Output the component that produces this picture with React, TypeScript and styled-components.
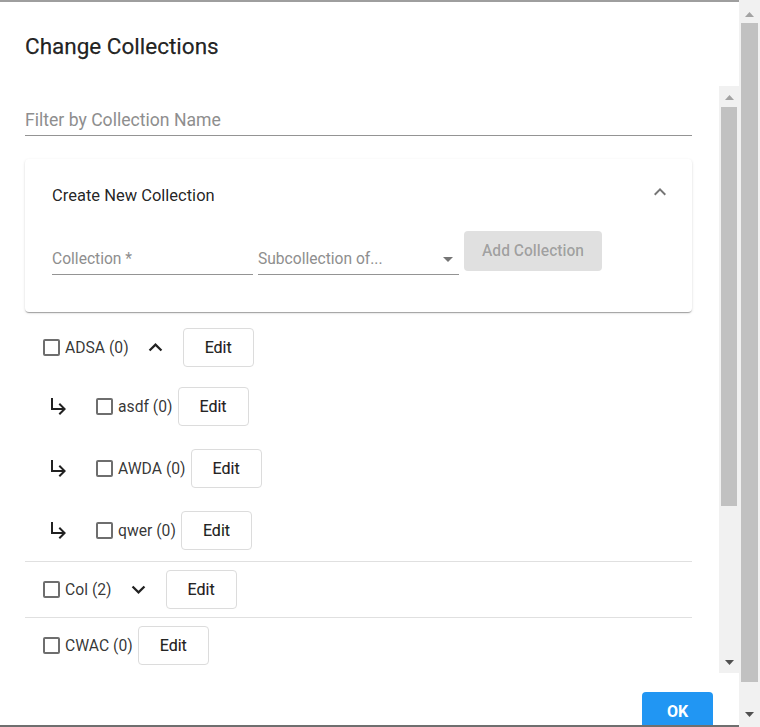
import React from 'react';
import styled, { createGlobalStyle } from 'styled-components';

const GlobalStyle = createGlobalStyle`
  html, body { margin: 0; padding: 0; background: #fff; overflow: hidden; }
  body { font-family: Roboto, "Noto Sans", Arial, sans-serif; }
  * { box-sizing: border-box; }
`;

/* ---------- scroll rails (drawn) ---------- */

const Rail = styled.div<{ $w: number }>`
  flex: none;
  width: ${(p) => p.$w}px;
  display: flex;
  flex-direction: column;
  background: #f1f1f1;
`;

const RailButton = styled.div<{ $h: number; $pt: number }>`
  flex: none;
  height: ${(p) => p.$h}px;
  padding-top: ${(p) => p.$pt}px;
  display: flex;
  justify-content: center;
  align-items: flex-start;
  svg {
    display: block;
  }
`;

const Thumb = styled.div<{ $top: number; $len: number }>`
  flex: none;
  margin: ${(p) => p.$top}px 2px 0;
  height: ${(p) => p.$len}px;
  background: #c1c1c1;
`;

const RailGap = styled.div`
  flex: 1;
`;

type RailProps = { w: number; upPad: number; downPad: number; thumbTop: number; thumbLen: number };

const ScrollRail = ({ w, upPad, downPad, thumbTop, thumbLen }: RailProps) => (
  <Rail $w={w}>
    <RailButton $h={w} $pt={upPad}>
      <svg width="9" height="5" viewBox="0 0 9 5">
        <polygon points="0,5 4.5,0 9,5" fill="#a3a3a3" />
      </svg>
    </RailButton>
    <Thumb $top={thumbTop} $len={thumbLen} />
    <RailGap />
    <RailButton $h={w} $pt={downPad}>
      <svg width="9" height="5" viewBox="0 0 9 5">
        <polygon points="0,0 9,0 4.5,5" fill="#505050" />
      </svg>
    </RailButton>
  </Rail>
);

/* ---------- dialog ---------- */

const Dialog = styled.div`
  height: 727px;
  display: flex;
  overflow: hidden;
  background: #fff;
`;

const Main = styled.div`
  flex: 1;
  min-width: 0;
  height: 727px;
  overflow: hidden;
  border-top: 2px solid #9e9e9e;
  border-bottom: 2px solid #6f6f6f;
`;

const Title = styled.h2`
  margin: 0;
  padding: 32px 25px 0;
  font-size: 22.5px;
  line-height: 24px;
  font-weight: 400;
  color: rgba(0, 0, 0, 0.87);
  -webkit-text-stroke: 0.25px rgba(0, 0, 0, 0.87);
`;

const ContentArea = styled.div`
  margin-top: 28px;
  height: 587px;
  display: flex;
  overflow: hidden;
`;

const ContentBody = styled.div`
  flex: 1;
  min-width: 0;
  padding: 18px 27px 0 25px;
  overflow: hidden;
`;

const TextInput = styled.input<{ $width?: number; $size?: number }>`
  display: block;
  width: ${(p) => (p.$width ? `${p.$width}px` : '100%')};
  height: 32px;
  padding: 7px 0 6px;
  border: none;
  border-bottom: 1px solid #949494;
  border-radius: 0;
  outline: none;
  background: transparent;
  font-family: Roboto, Arial, sans-serif;
  font-size: ${(p) => p.$size ?? 16}px;
  color: rgba(0, 0, 0, 0.87);
  &::placeholder {
    color: #8e8e8e;
    opacity: 1;
  }
`;

const Card = styled.section`
  margin-top: 23px;
  background: #fff;
  border-radius: 4px;
  box-shadow: 0 2px 1px -1px rgba(0, 0, 0, 0.2), 0 1px 1px 0 rgba(0, 0, 0, 0.14),
    0 1px 3px 0 rgba(0, 0, 0, 0.12);
  padding: 0 20px 37px 27px;
`;

const CardHeader = styled.div`
  height: 72px;
  display: flex;
  align-items: center;
  justify-content: space-between;
`;

const CardTitle = styled.span`
  font-size: 16.5px;
  color: rgba(0, 0, 0, 0.87);
`;

const HeaderChevron = styled.svg`
  width: 24px;
  height: 24px;
  margin-top: -7px;
  fill: rgba(0, 0, 0, 0.54);
`;

const FieldsRow = styled.div`
  display: flex;
  align-items: flex-end;
  gap: 5px;
`;

const SelectBox = styled.div`
  width: 201px;
  height: 32px;
  padding-top: 1px;
  display: flex;
  align-items: center;
  justify-content: space-between;
  border-bottom: 1px solid #949494;
  font-size: 15.6px;
  color: #8e8e8e;
`;

const DropIcon = styled.svg`
  width: 24px;
  height: 24px;
  margin-right: -1px;
  fill: rgba(0, 0, 0, 0.54);
`;

const AddButton = styled.button`
  width: 138px;
  height: 40px;
  margin: 0 0 4px;
  padding: 0;
  border: none;
  border-radius: 4px;
  background: #e0e0e0;
  color: rgba(0, 0, 0, 0.3);
  font-family: Roboto, Arial, sans-serif;
  font-size: 15.6px;
  font-weight: 500;
`;

const List = styled.div`
  margin-top: 8px;
`;

const Group = styled.div`
  border-bottom: 1px solid #e0e0e0;
`;

const Row = styled.div<{ $sub?: boolean }>`
  display: flex;
  align-items: center;
  padding: ${(p) => (p.$sub ? '11.5px 0 11.5px 22px' : '8px 0 8px 18px')};
`;

const SubArrow = styled.svg`
  width: 24px;
  height: 24px;
  margin-right: 25px;
  fill: rgba(0, 0, 0, 0.87);
  flex: none;
`;

const CheckBox = styled.span`
  width: 17px;
  height: 17px;
  border: 2px solid #6e6e6e;
  border-radius: 2px;
  flex: none;
  margin-right: 5px;
`;

const Label = styled.span`
  font-size: 15.7px;
  color: rgba(0, 0, 0, 0.8);
  margin-right: 5px;
  white-space: nowrap;
`;

const ToggleIcon = styled.span`
  width: 44px;
  height: 39px;
  margin-right: 5px;
  display: flex;
  align-items: center;
  justify-content: center;
  svg {
    width: 27px;
    height: 27px;
    fill: rgba(0, 0, 0, 0.87);
  }
`;

const EditButton = styled.button`
  height: 39px;
  padding: 0 21px;
  border: 1px solid #dcdcdc;
  border-radius: 4px;
  background: #fff;
  font-family: Roboto, Arial, sans-serif;
  font-size: 16px;
  font-weight: 400;
  color: rgba(0, 0, 0, 0.87);
  -webkit-text-stroke: 0.2px rgba(0, 0, 0, 0.87);
`;

const Footer = styled.div`
  display: flex;
  justify-content: flex-end;
  padding: 19px 26px 26px;
`;

const OkButton = styled.button`
  width: 71px;
  height: 38px;
  border: none;
  border-radius: 4px;
  background: #2196f3;
  color: #fff;
  font-family: Roboto, Arial, sans-serif;
  font-size: 16px;
  font-weight: 700;
`;

const ExpandLess = () => (
  <svg viewBox="0 0 24 24">
    <path d="M12 8l-6 6 1.41 1.41L12 10.83l4.59 4.58L18 14z" />
  </svg>
);

const ExpandMore = () => (
  <svg viewBox="0 0 24 24">
    <path d="M16.59 8.59L12 13.17 7.41 8.59 6 10l6 6 6-6z" />
  </svg>
);

type Item = { name: string; count: number; open?: boolean; hasChildren?: boolean; children?: Item[] };

const collections: Item[] = [
  {
    name: 'ADSA',
    count: 0,
    open: true,
    hasChildren: true,
    children: [
      { name: 'asdf', count: 0 },
      { name: 'AWDA', count: 0 },
      { name: 'qwer', count: 0 },
    ],
  },
  { name: 'Col', count: 2, hasChildren: true },
  { name: 'CWAC', count: 0 },
];

export default function App() {
  return (
    <>
      <GlobalStyle />
      <Dialog>
        <Main>
          <Title>Change Collections</Title>
          <ContentArea>
            <ContentBody>
              <TextInput $size={17.6} placeholder="Filter by Collection Name" />
              <Card>
                <CardHeader>
                  <CardTitle>Create New Collection</CardTitle>
                  <HeaderChevron viewBox="0 0 24 24">
                    <path d="M12 8l-6 6 1.41 1.41L12 10.83l4.59 4.58L18 14z" />
                  </HeaderChevron>
                </CardHeader>
                <FieldsRow>
                  <TextInput $width={201} $size={15.6} placeholder="Collection *" />
                  <SelectBox>
                    <span>Subcollection of...</span>
                    <DropIcon viewBox="0 0 24 24">
                      <path d="M7 10l5 5 5-5z" />
                    </DropIcon>
                  </SelectBox>
                  <AddButton disabled>Add Collection</AddButton>
                </FieldsRow>
              </Card>
              <List>
                {collections.map((c) => (
                  <Group key={c.name}>
                    <Row>
                      <CheckBox />
                      <Label>
                        {c.name} ({c.count})
                      </Label>
                      {c.hasChildren && (
                        <ToggleIcon>{c.open ? <ExpandLess /> : <ExpandMore />}</ToggleIcon>
                      )}
                      <EditButton>Edit</EditButton>
                    </Row>
                    {c.open &&
                      c.children?.map((s) => (
                        <Row $sub key={s.name}>
                          <SubArrow viewBox="0 0 24 24">
                            <path d="M19 15l-6 6-1.42-1.42L15.17 16H4V4h2v10h9.17l-3.59-3.58L13 9l6 6z" />
                          </SubArrow>
                          <CheckBox />
                          <Label>
                            {s.name} ({s.count})
                          </Label>
                          <EditButton>Edit</EditButton>
                        </Row>
                      ))}
                  </Group>
                ))}
              </List>
            </ContentBody>
            <ScrollRail w={20} upPad={9} downPad={7} thumbTop={1} thumbLen={399} />
          </ContentArea>
          <Footer>
            <OkButton>OK</OkButton>
          </Footer>
        </Main>
        <ScrollRail w={21} upPad={12} downPad={6} thumbTop={2} thumbLen={659} />
      </Dialog>
    </>
  );
}
